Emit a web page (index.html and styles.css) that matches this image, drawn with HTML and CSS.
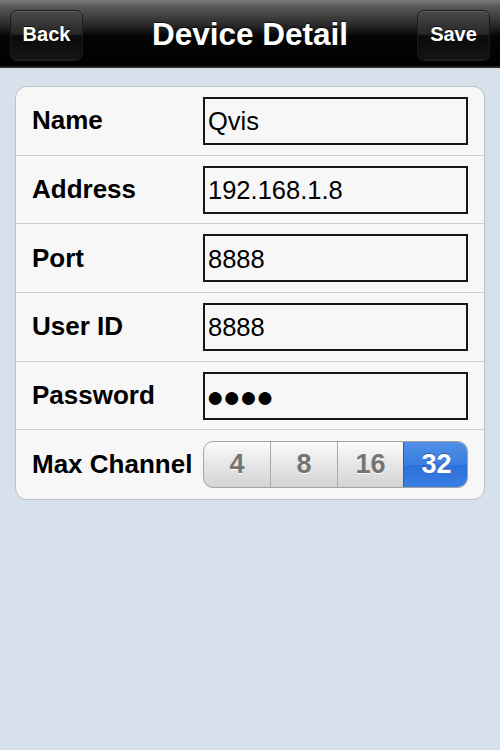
FILE: index.html
```html
<!DOCTYPE html>
<html>
<head>
<meta charset="utf-8">
<link rel="stylesheet" href="styles.css">
</head>
<body>
<header class="navbar">
  <button class="nav-btn">Back</button>
  <h1 class="nav-title">Device Detail</h1>
  <button class="nav-btn">Save</button>
</header>
<main class="content">
  <section class="card">
    <div class="row">
      <span class="label">Name</span>
      <div class="field">Qvis</div>
    </div>
    <div class="row">
      <span class="label">Address</span>
      <div class="field">192.168.1.8</div>
    </div>
    <div class="row">
      <span class="label">Port</span>
      <div class="field">8888</div>
    </div>
    <div class="row">
      <span class="label">User ID</span>
      <div class="field">8888</div>
    </div>
    <div class="row">
      <span class="label">Password</span>
      <div class="field dots">●●●●</div>
    </div>
    <div class="row">
      <span class="label">Max Channel</span>
      <div class="segmented">
        <span class="seg">4</span>
        <span class="seg">8</span>
        <span class="seg">16</span>
        <span class="seg selected">32</span>
      </div>
    </div>
  </section>
</main>
</body>
</html>
```
FILE: styles.css
```css
* { box-sizing: border-box; }
html, body { margin: 0; padding: 0; }
body {
  width: 500px;
  height: 750px;
  background: #d6e1ec;
  font-family: "Liberation Sans", Arial, sans-serif;
  overflow: hidden;
}
.navbar {
  height: 68px;
  display: flex;
  align-items: center;
  justify-content: space-between;
  padding: 0 10px 0 10px;
  background: linear-gradient(to bottom, #7b7b7b 0px, #5a5a5a 6px, #2c2c2c 24px, #050505 36px, #000 66px, #3a3a3a 67px, #2a2a2a 68px);
}
.nav-btn {
  width: 73px;
  height: 50px;
  margin-top: 1px;
  border-radius: 7px;
  border: 1px solid #1a1a1a;
  box-shadow: 0 1px 0 rgba(255,255,255,0.12), inset 0 1px 0 rgba(255,255,255,0.15);
  background: linear-gradient(to bottom, #4a4a4a 0%, #262626 48%, #0b0b0b 52%, #141414 100%);
  color: #fff;
  font-family: "Liberation Sans", Arial, sans-serif;
  font-weight: bold;
  font-size: 20px;
  text-shadow: 0 -1px 0 rgba(0,0,0,0.6);
  padding: 0;
}
.nav-title {
  margin: 0;
  color: #fff;
  font-size: 31.5px;
  font-weight: bold;
  text-shadow: 0 -1px 0 rgba(0,0,0,0.6);
}
.content {
  padding: 18px 15px 0 15px;
}
.card {
  background: #f7f7f7;
  border: 1px solid #b9c1c9;
  border-radius: 12px;
  overflow: hidden;
}
.row {
  height: 68.7px;
  display: grid;
  grid-template-columns: 171px 265px;
  align-items: center;
  padding-left: 16px;
  border-bottom: 1px solid #cfcfcf;
}
.row:last-child { border-bottom: none; }
.label {
  font-size: 26px;
  font-weight: bold;
  color: #000;
  white-space: nowrap;
}
.field {
  height: 48px;
  border: 2px solid #161616;
  background: #f7f7f7;
  font-size: 25.5px;
  color: #000;
  display: flex;
  align-items: center;
  padding-left: 3px;
  padding-top: 2px;
}
.field.dots {
  font-size: 30px;
  letter-spacing: -1.5px;
  padding-left: 1px;
}
.segmented {
  height: 47px;
  display: grid;
  grid-template-columns: 66px 67px 66px 66px;
  border: 1px solid #a3a3a3;
  border-radius: 10px;
  overflow: hidden;
  background: linear-gradient(to bottom, #fbfbfb 0%, #e6e6e6 50%, #d4d4d4 100%);
}
.seg {
  display: flex;
  align-items: center;
  justify-content: center;
  font-size: 27px;
  font-weight: bold;
  color: #747474;
  text-shadow: 0 1px 0 #fff;
  border-left: 1px solid #a8a8a8;
}
.seg:first-child { border-left: none; }
.seg.selected {
  color: #fff;
  text-shadow: 0 -1px 0 rgba(0,0,0,0.3);
  border-left: 1px solid #2b5ea8;
  background: linear-gradient(to bottom, #4f8fe6 0%, #3a7ee0 50%, #2c6fd9 52%, #3a7fe2 100%);
}
```
